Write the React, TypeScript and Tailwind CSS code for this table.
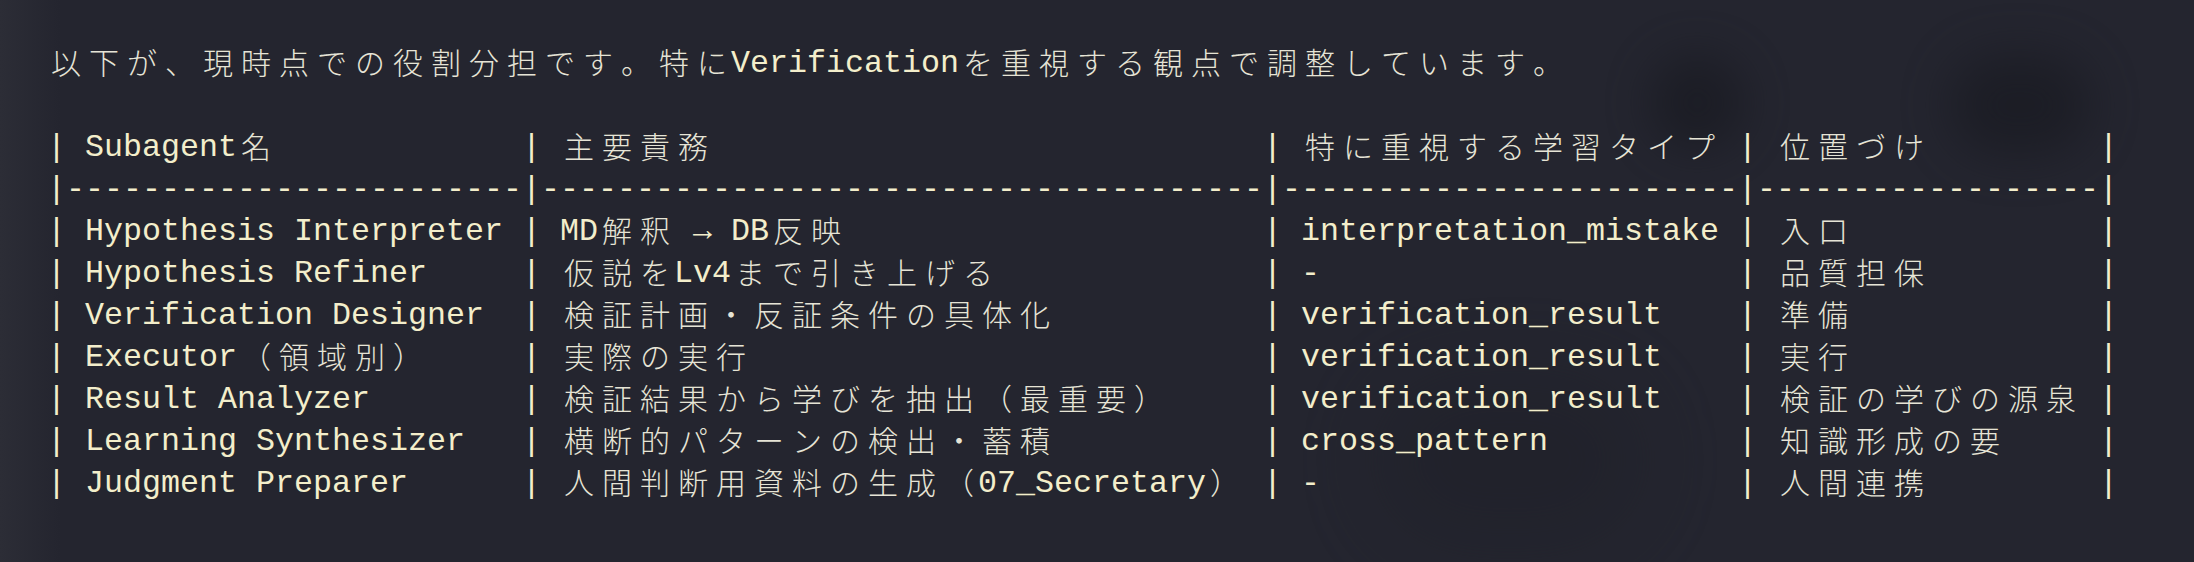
import React from "react";

const isNarrow = (ch: string) => {
  const c = ch.codePointAt(0) || 0;
  return c <= 0x7e || ch === "→";
};

const dispWidth = (s: string) =>
  Array.from(s).reduce((a, ch) => a + (isNarrow(ch) ? 1 : 2), 0);

const pad = (s: string, w: number) => s + " ".repeat(Math.max(0, w - dispWidth(s)));

const widths = [24, 38, 24, 18];

const header = ["Subagent名", "主要責務", "特に重視する学習タイプ", "位置づけ"];
const rows: string[][] = [
  ["Hypothesis Interpreter", "MD解釈 → DB反映", "interpretation_mistake", "入口"],
  ["Hypothesis Refiner", "仮説をLv4まで引き上げる", "-", "品質担保"],
  ["Verification Designer", "検証計画・反証条件の具体化", "verification_result", "準備"],
  ["Executor（領域別）", "実際の実行", "verification_result", "実行"],
  ["Result Analyzer", "検証結果から学びを抽出（最重要）", "verification_result", "検証の学びの源泉"],
  ["Learning Synthesizer", "横断的パターンの検出・蓄積", "cross_pattern", "知識形成の要"],
  ["Judgment Preparer", "人間判断用資料の生成（07_Secretary）", "-", "人間連携"],
];

const rowLine = (cells: string[]) =>
  "|" + cells.map((c, i) => " " + pad(c, widths[i] - 2) + " ").join("|") + "|";

const dashLine = "|" + widths.map((w) => "-".repeat(w)).join("|") + "|";

const lines: string[] = [
  "以下が、現時点での役割分担です。特にVerificationを重視する観点で調整しています。",
  "",
  rowLine(header),
  dashLine,
  ...rows.map(rowLine),
];

function Line({ text }: { text: string }) {
  const chars = Array.from(text);
  return (
    <div className="flex h-[42px] items-center">
      {chars.map((ch, i) =>
        isNarrow(ch) ? (
          <span
            key={i}
            className="relative top-[3px] inline-block w-[19px] shrink-0 text-center whitespace-pre text-[31.67px] leading-[42px] text-[#f3eecb] [font-family:'Liberation_Mono',monospace]"
          >
            {ch}
          </span>
        ) : (
          <span
            key={i}
            className="inline-block w-[38px] shrink-0 text-center text-[30px] leading-[42px] font-light text-[#e6e4d6] [font-family:'Noto_Sans_CJK_JP',sans-serif]"
          >
            {ch}
          </span>
        )
      )}
    </div>
  );
}

export default function App() {
  return (
    <div className="relative h-[562px] w-full overflow-hidden bg-[#24252f]">
      <div className="pointer-events-none absolute inset-y-0 left-0 w-[60px] bg-gradient-to-r from-[#2c2d36] to-[#24252f]" />
      <div className="pointer-events-none absolute left-[1650px] top-[55px] h-[95px] w-[95px] rounded-full bg-[#17181f] opacity-60 blur-[22px]" />
      <div className="pointer-events-none absolute left-[1950px] top-[55px] h-[100px] w-[140px] rounded-full bg-[#17181f] opacity-60 blur-[24px]" />
      <div className="pointer-events-none absolute left-[1380px] top-[380px] h-[160px] w-[260px] rounded-full bg-[#1d1e26] opacity-40 blur-[40px]" />
      <div className="relative pl-[47px] pt-[40px]">
        {lines.map((l, i) => (
          <Line key={i} text={l} />
        ))}
      </div>
    </div>
  );
}
